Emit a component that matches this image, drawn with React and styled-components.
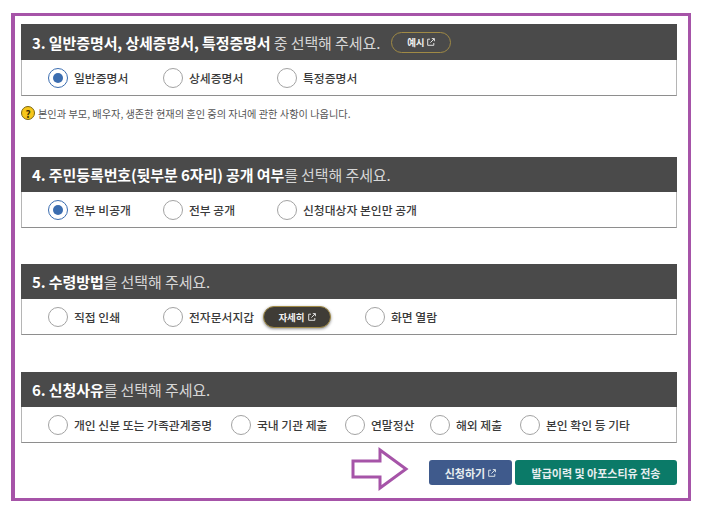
import React from "react";
import styled, { createGlobalStyle } from "styled-components";

const GlobalStyle = createGlobalStyle`
  html, body {
    margin: 0;
    padding: 0;
    background: #fff;
  }
  body {
    font-family: "Noto Sans CJK KR", "Noto Sans", sans-serif;
  }
`;

const Page = styled.div`
  width: 701px;
  height: 518px;
  padding: 13px 0 0 11px;
  box-sizing: border-box;
  overflow: hidden;
`;

const Frame = styled.div`
  width: 680px;
  height: 488px;
  box-sizing: border-box;
  border: 3px solid #a654a8;
  border-left-width: 4px;
  padding: 8px 11px 0 6px;
`;

const Section = styled.section`
  margin-top: ${({ $top }) => $top || 0}px;
  margin-bottom: ${({ $gap }) => $gap}px;
`;

const Header = styled.h2`
  margin: 0;
  height: ${({ $h }) => $h || 35}px;
  background: #4a4a4a;
  color: #d6d6d6;
  display: flex;
  align-items: center;
  padding-left: 11px;
  font-size: 15px;
  font-weight: 400;
  white-space: nowrap;
  letter-spacing: -0.1px;

  b {
    color: #fff;
    font-weight: 700;
  }
`;

const Body = styled.div`
  height: 36px;
  box-sizing: border-box;
  background: #fff;
  border: 1px solid #b5b5b5;
  border-top: none;
  border-bottom: 1px solid #8e8e8e;
  display: flex;
  align-items: center;
  padding-left: 26px;
`;

const Option = styled.label`
  width: ${({ $w }) => $w}px;
  margin-left: ${({ $ml }) => $ml || 0}px;
  flex: none;
  display: flex;
  align-items: center;
  gap: 6px;
  font-size: 11.8px;
  font-weight: 500;
  color: #3a3a3a;
  white-space: nowrap;
`;

const Radio = styled.span`
  width: 20px;
  height: 20px;
  flex: none;
  box-sizing: border-box;
  border-radius: 50%;
  border: 1.5px solid ${({ $on }) => ($on ? "#3b6db0" : "#a3a3a3")};
  display: flex;
  align-items: center;
  justify-content: center;

  &::after {
    content: "";
    display: ${({ $on }) => ($on ? "block" : "none")};
    width: 10px;
    height: 10px;
    border-radius: 50%;
    background: #3b6db0;
  }
`;

const Pill = styled.span`
  width: ${({ $w }) => $w}px;
  height: ${({ $dark }) => ($dark ? 22 : 21)}px;
  margin-left: ${({ $ml }) => $ml || 0}px;
  flex: none;
  box-sizing: border-box;
  border-radius: 12px;
  border: 1.5px solid #a08a45;
  background: ${({ $dark }) => ($dark ? "#3f3c36" : "#4a4a4a")};
  box-shadow: ${({ $dark }) => ($dark ? "0 1px 3px rgba(0,0,0,.45)" : "none")};
  color: #f0f0f0;
  font-size: 9.5px;
  font-weight: 700;
  display: flex;
  align-items: center;
  justify-content: center;
  gap: 3px;
`;

const Note = styled.p`
  margin: 9px 0 0;
  display: flex;
  align-items: center;
  gap: 3px;
  height: 16px;
  font-size: 10.2px;
  color: #555;
  white-space: nowrap;
`;

const Help = styled.span`
  width: 14px;
  height: 14px;
  flex: none;
  box-sizing: border-box;
  border-radius: 50%;
  background: #f6c619;
  border: 1px solid #7a6510;
  color: #3a3000;
  font-size: 10px;
  font-weight: 700;
  display: flex;
  align-items: center;
  justify-content: center;
`;

const Footer = styled.div`
  display: flex;
  align-items: flex-start;
  justify-content: flex-end;
  margin-top: 4px;
`;

const Arrow = styled.svg`
  flex: none;
  margin-right: 20px;
`;

const Button = styled.button`
  width: ${({ $w }) => $w}px;
  height: 25px;
  margin: 13px 0 0 ${({ $ml }) => $ml || 0}px;
  padding: 0;
  border: none;
  border-radius: 3px;
  background: ${({ $bg }) => $bg};
  color: #e8eef0;
  font-family: inherit;
  font-size: 11px;
  font-weight: 700;
  display: flex;
  align-items: center;
  justify-content: center;
  gap: 3px;
`;

function ExtIcon() {
  return (
    <svg width="8" height="8" viewBox="0 0 8 8" fill="none" stroke="currentColor" strokeWidth="0.9">
      <path d="M3 1.2H.7v6.1h6.1V5" />
      <path d="M3.4 4.6 7.2.8M4.8.6h2.6v2.6" />
    </svg>
  );
}

function Choice({ w, on, children }) {
  return (
    <Option $w={w}>
      <Radio $on={on} />
      {children}
    </Option>
  );
}

export default function App() {
  return (
    <>
      <GlobalStyle />
      <Page>
        <Frame>
          <Section $gap={0}>
            <Header $h={36}>
              <b>3. 일반증명서, 상세증명서, 특정증명서</b>&nbsp;중 선택해 주세요.
              <Pill $w={60} $ml={11}>
                예시 <ExtIcon />
              </Pill>
            </Header>
            <Body>
              <Choice w={115} on>일반증명서</Choice>
              <Choice w={114}>상세증명서</Choice>
              <Choice w={114}>특정증명서</Choice>
            </Body>
            <Note>
              <Help>?</Help>
              본인과 부모, 배우자, 생존한 현재의 혼인 중의 자녀에 관한 사항이 나옵니다.
            </Note>
          </Section>

          <Section $top={36} $gap={36}>
            <Header>
              <b>4. 주민등록번호(뒷부분 6자리) 공개 여부</b>를 선택해 주세요.
            </Header>
            <Body>
              <Choice w={115} on>전부 비공개</Choice>
              <Choice w={114}>전부 공개</Choice>
              <Choice w={200}>신청대상자 본인만 공개</Choice>
            </Body>
          </Section>

          <Section $gap={37}>
            <Header>
              <b>5. 수령방법</b>을 선택해 주세요.
            </Header>
            <Body>
              <Choice w={115}>직접 인쇄</Choice>
              <Choice w={100}>전자문서지갑</Choice>
              <Pill $dark $w={68}>
                자세히 <ExtIcon />
              </Pill>
              <Option $w={100} $ml={34}>
                <Radio />
                화면 열람
              </Option>
            </Body>
          </Section>

          <Section $gap={0}>
            <Header>
              <b>6. 신청사유</b>를 선택해 주세요.
            </Header>
            <Body>
              <Choice w={183}>개인 신분 또는 가족관계증명</Choice>
              <Choice w={114}>국내 기관 제출</Choice>
              <Choice w={85}>연말정산</Choice>
              <Choice w={90}>해외 제출</Choice>
              <Choice w={130}>본인 확인 등 기타</Choice>
            </Body>
          </Section>

          <Footer>
            <Arrow width="58" height="44" viewBox="0 0 58 44">
              <path
                d="M2 14H29V3L55 22 29 41V30H2Z"
                fill="#fff"
                stroke="#a654a8"
                strokeWidth="3"
              />
            </Arrow>
            <Button $w={83} $bg="#3f5a8c">
              신청하기 <ExtIcon />
            </Button>
            <Button $w={162} $ml={3} $bg="#0b7a68">
              발급이력 및 아포스티유 전송
            </Button>
          </Footer>
        </Frame>
      </Page>
    </>
  );
}
